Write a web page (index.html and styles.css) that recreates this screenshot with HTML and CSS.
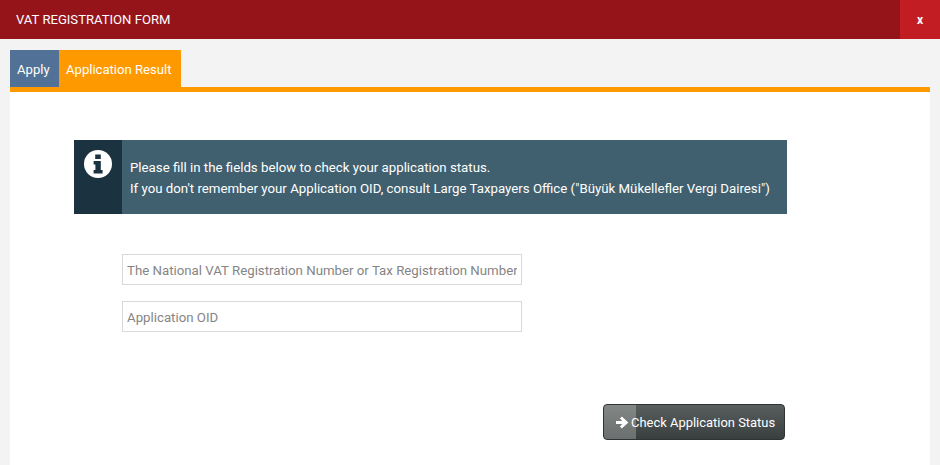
FILE: index.html
```html
<!DOCTYPE html>
<html lang="en">
<head>
<meta charset="utf-8">
<title>VAT Registration Form</title>
<link rel="stylesheet" href="styles.css">
</head>
<body>
<header class="topbar">
  <h1 class="topbar-title">VAT REGISTRATION FORM</h1>
  <button class="close-btn" type="button">x</button>
</header>
<main class="page">
  <nav class="tabs">
    <a class="tab tab-apply">Apply</a>
    <a class="tab tab-active">Application Result</a>
  </nav>
  <section class="panel">
    <div class="alert">
      <div class="alert-icon">
        <svg width="28" height="28" viewBox="0 0 28 28">
          <circle cx="14" cy="14" r="14" fill="#fff"/>
          <path fill="#1b3340" d="M11.200 4.600h5.600v4.400h-5.600zM9.600 11h7.200v9h1.800v3.600H9.600V20h1.800v-5.400H9.600z"/>
        </svg>
      </div>
      <p class="alert-text">Please fill in the fields below to check your application status.<br>If you don't remember your Application OID, consult Large Taxpayers Office ("Büyük Mükellefler Vergi Dairesi")</p>
    </div>
    <form class="form">
      <input class="field" type="text" placeholder="The National VAT Registration Number or Tax Registration Number">
      <input class="field" type="text" placeholder="Application OID">
      <div class="actions">
        <button class="submit" type="button">
          <svg class="submit-icon" width="13" height="13" viewBox="0 0 13 13"><path fill="#fff" d="M0 5h6.200L4 2.400 5.800.6 12.400 6.500 5.800 12.400 4 10.600 6.200 8H0z"/></svg>
          <span>Check Application Status</span>
        </button>
      </div>
    </form>
  </section>
</main>
</body>
</html>
```
FILE: styles.css
```css
* { box-sizing: border-box; }
html, body { height: 100%; }
body {
  margin: 0;
  background: #f3f3f3;
  font-family: Roboto, "Noto Sans", sans-serif;
  overflow: hidden;
}
.topbar {
  height: 39px;
  background: #95141a;
  display: flex;
  align-items: center;
  justify-content: space-between;
}
.topbar-title {
  margin: 0 0 0 16px;
  font-size: 13.1px;
  font-weight: 400;
  color: #fff;
}
.close-btn {
  width: 40px;
  height: 39px;
  border: 0;
  padding: 0;
  background: #c11d23;
  color: #fff;
  font: 700 12px Roboto, sans-serif;
}
.page { padding: 11px 10px 0; }
.tabs { display: flex; height: 37px; }
.tab {
  display: flex;
  align-items: center;
  padding: 1px 7px 0;
  font-size: 13.1px;
  color: #fff;
  white-space: nowrap;
}
.tab-apply { background: #527196; width: 49px; }
.tab-active { background: #ff9900; width: 122px; }
.panel {
  background: #fff;
  border-top: 5px solid #ff9900;
  height: 378px;
  padding: 48px 143px 0 64px;
}
.alert {
  display: flex;
  height: 74px;
  background: #41606f;
  color: #fff;
}
.alert-icon {
  flex: none;
  width: 48px;
  background: #1b3340;
  display: flex;
  justify-content: center;
  align-items: flex-start;
  padding-top: 10px;
}
.alert-text {
  margin: 0;
  padding: 17px 0 0 8px;
  font-size: 13.25px;
  line-height: 21px;
  white-space: nowrap;
}
.form {
  margin: 40px 0 0 48px;
  display: flex;
  flex-direction: column;
  gap: 16px;
}
.field {
  width: 400px;
  height: 31px;
  border: 1px solid #d9d9d9;
  padding: 1px 4px 0;
  background: #fff;
  font: 13.25px Roboto, sans-serif;
  color: #333;
}
.field::placeholder { color: #858585; opacity: 1; }
.actions {
  display: flex;
  margin: 56px 0 0 481px;
}
.submit {
  width: 182px;
  height: 36px;
  flex: none;
  border: 1px solid #2e3333;
  border-radius: 4px;
  padding: 0 0 0 12px;
  display: flex;
  align-items: center;
  gap: 2px;
  color: #fff;
  font: 12.95px Roboto, sans-serif;
  white-space: nowrap;
  background:
    linear-gradient(to right, rgba(255,255,255,.25) 32px, transparent 32px),
    linear-gradient(to bottom, #595f5e, #393f3e);
}
```
